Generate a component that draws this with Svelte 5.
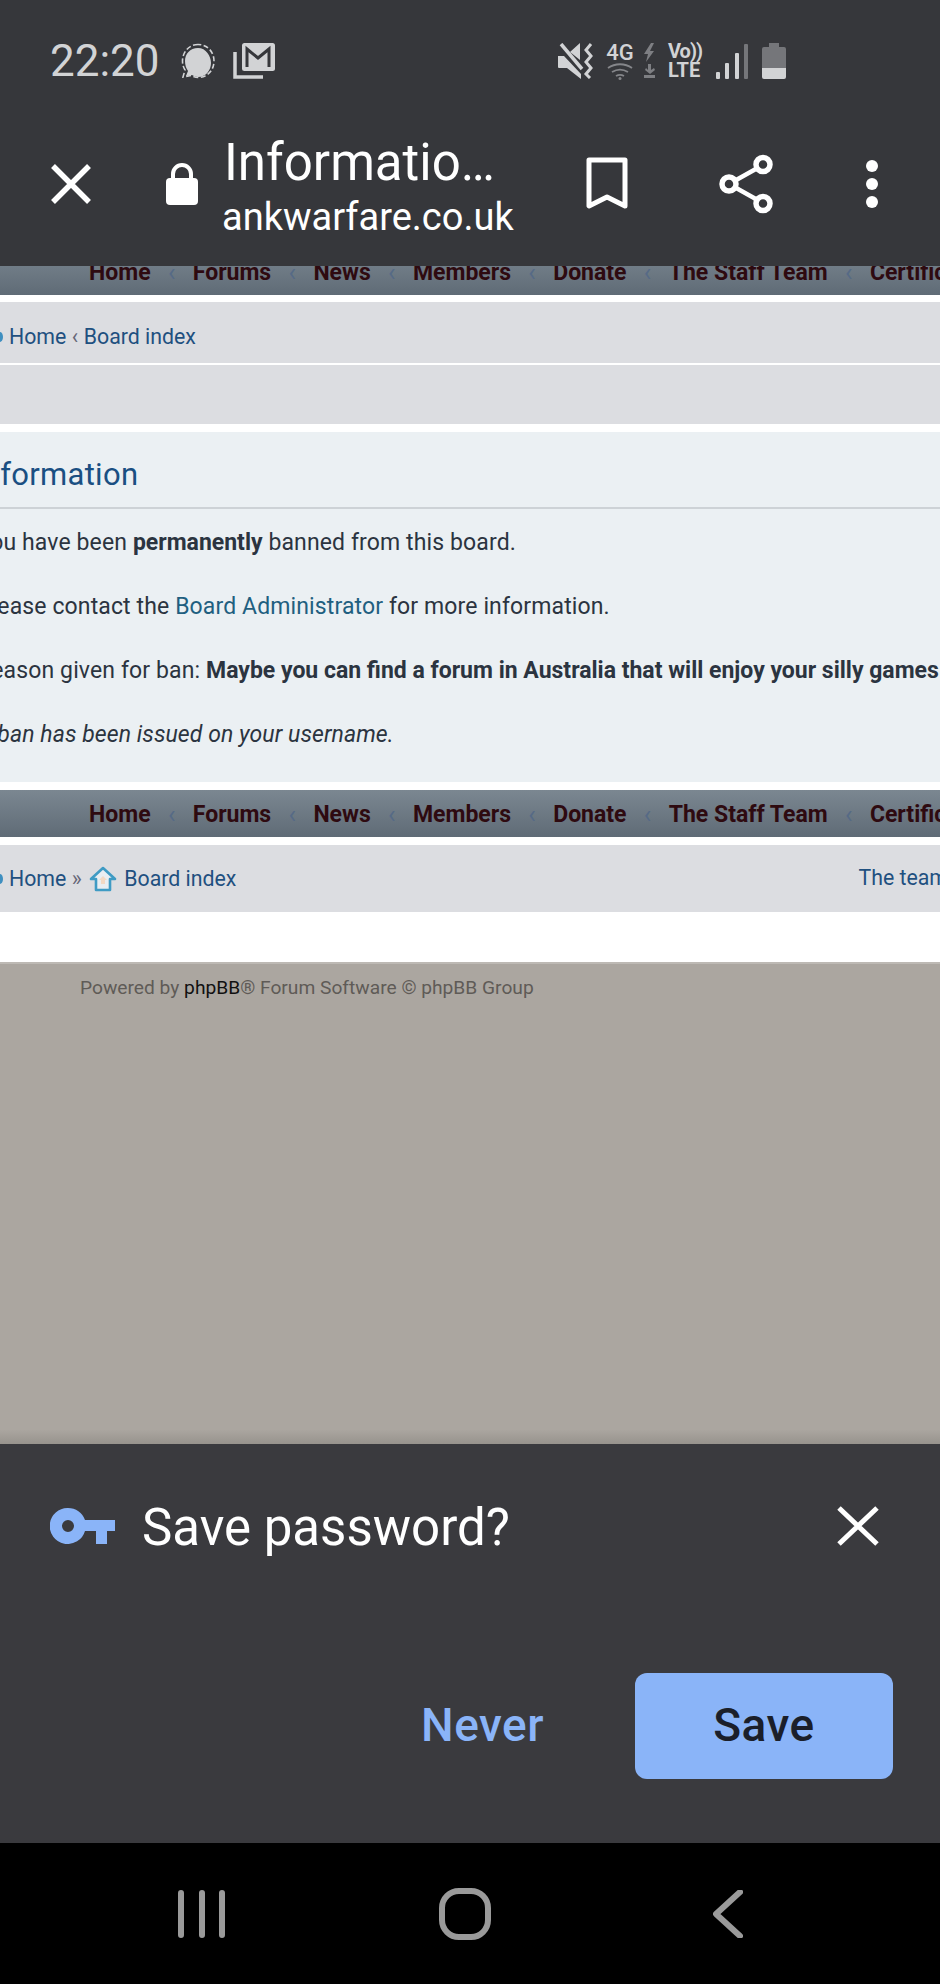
<script>
    const navItems = ["Home", "Forums", "News", "Members", "Donate", "The Staff Team", "Certification"];
</script>

{#snippet forumNav()}
    <nav class="forum-nav">
        {#each navItems as item, i}
            {#if i > 0}<span class="nav-sep">‹</span>{/if}
            <span class="nav-item">{item}</span>
        {/each}
    </nav>
{/snippet}

<div class="phone">
    <header class="top">
        <div class="status">
            <span class="time">22:20</span>
            <svg class="signal-app" width="34" height="36" viewBox="0 0 34 36">
                <path d="M17 5C9 5 4 11 4 18c0 4 1 7 3 10l-2 5 6-1c2 1 4 2 6 2 8 0 13-7 13-14S25 5 17 5z" fill="#d2d3d5" />
                <path d="M17 1.500C8 1.500 1.500 9 1.500 18c0 3.500 1 6.500 2.500 9L2 34l8-1.500c2 1 4.500 2 7 2 9 0 16-7 16-16.500S26 1.500 17 1.500z" fill="none" stroke="#d2d3d5" stroke-width="1.600" stroke-dasharray="5 2.500" />
            </svg>
            <svg class="mail" width="42" height="36" viewBox="0 0 42 36">
                <path d="M2 9v25h28" fill="none" stroke="#d2d3d5" stroke-width="3.500" />
                <rect x="9" y="0" width="33" height="28" rx="2.500" fill="#d2d3d5" />
                <path d="M14 24V6l11 9 11-9v18" fill="none" stroke="#36373b" stroke-width="3" />
            </svg>
            <div class="status-right">
                <svg class="mute" width="36" height="36" viewBox="0 0 36 36">
                    <path d="M0 13h6l17 18v5L9 25H1a1 1 0 0 1-1-1zM12 9l10-9v17z" fill="#d2d3d5" />
                    <path d="M3 1l21 25" stroke="#d2d3d5" stroke-width="3.500" />
                    <path d="M33 1l-5 6 5 6-5 6 5 6-5 6 4 4" fill="none" stroke="#d2d3d5" stroke-width="3" />
                </svg>
                <div class="net">
                    <span class="net-label">4G</span>
                    <svg width="26" height="17" viewBox="0 0 26 17">
                        <path d="M1 5c7-5 17-5 24 0M5 9c5-3 11-3 16 0M9 13c2.500-1.500 5.500-1.500 8 0" fill="none" stroke="#85868a" stroke-width="1.800" />
                        <circle cx="13" cy="15.500" r="1.500" fill="#85868a" />
                    </svg>
                </div>
                <svg class="bolt" width="13" height="36" viewBox="0 0 13 36">
                    <path d="M8 0L1 11h4l-2 8 8-11H7l4-8zM5 21h3v6l3-2 1 2-5 4-5-4 1-2 2 2zM1 32h11v3H1z" fill="#7e7f83" />
                </svg>
                <div class="volte"><span class="vo">Vo))</span><span>LTE</span></div>
                <svg class="bars" width="33" height="36" viewBox="0 0 33 36">
                    <rect x="0" y="29" width="4" height="7" rx="1" fill="#d2d3d5" />
                    <rect x="9" y="20" width="4" height="16" rx="1" fill="#d2d3d5" />
                    <rect x="19" y="10" width="4" height="26" rx="1" fill="#d2d3d5" />
                    <rect x="28" y="1" width="4" height="35" rx="1" fill="#75767a" />
                </svg>
                <svg class="battery" width="24" height="36" viewBox="0 0 24 36">
                    <path d="M7 0h10v4h5a2 2 0 0 1 2 2v19H0V6a2 2 0 0 1 2-2h5z" fill="#75767a" />
                    <path d="M0 25h24v9a2 2 0 0 1-2 2H2a2 2 0 0 1-2-2z" fill="#d2d3d5" />
                </svg>
            </div>
        </div>
        <div class="toolbar">
            <svg class="close" width="40" height="40" viewBox="0 0 40 40">
                <path d="M2 2l36 36M38 2L2 38" stroke="#fff" stroke-width="5.500" />
            </svg>
            <svg class="lock" width="32" height="42" viewBox="0 0 32 42">
                <path d="M7 17v-6a9 9 0 0 1 18 0v6" fill="none" stroke="#fff" stroke-width="4" />
                <rect x="0" y="15" width="32" height="27" rx="4" fill="#fff" />
            </svg>
            <div class="title-block">
                <div class="title">Informatio…</div>
                <div class="url">ankwarfare.co.uk</div>
            </div>
            <svg class="bookmark" width="42" height="54" viewBox="0 0 42 54">
                <path d="M3 3h36v46L21 40 3 49z" fill="none" stroke="#fff" stroke-width="5" stroke-linejoin="round" />
            </svg>
            <svg class="share" width="54" height="60" viewBox="0 0 54 60">
                <path d="M44 11L10 30l34 19" fill="none" stroke="#fff" stroke-width="4.500" />
                <circle cx="44" cy="10.500" r="7" fill="#36373b" stroke="#fff" stroke-width="5.500" />
                <circle cx="10" cy="30" r="7" fill="#36373b" stroke="#fff" stroke-width="5.500" />
                <circle cx="44" cy="49.500" r="7" fill="#36373b" stroke="#fff" stroke-width="5.500" />
            </svg>
            <svg class="dots" width="12" height="48" viewBox="0 0 12 48">
                <circle cx="6" cy="6" r="6" fill="#fff" />
                <circle cx="6" cy="24" r="6" fill="#fff" />
                <circle cx="6" cy="42" r="6" fill="#fff" />
            </svg>
        </div>
    </header>

    <main class="page">
        <div class="nav-clip">{@render forumNav()}</div>

        <div class="crumbs top-crumbs">
            <span class="crumb-dot"></span>
            <a href="#home">Home</a>
            <span class="crumb-sep">‹</span>
            <a href="#index">Board index</a>
        </div>
        <div class="empty-bar"></div>

        <section class="panel">
            <h2>Information</h2>
            <div class="panel-body">
                <p>You have been <strong>permanently</strong> banned from this board.</p>
                <p>Please contact the <a href="#admin">Board Administrator</a> for more information.</p>
                <p>Reason given for ban: <strong>Maybe you can find a forum in Australia that will enjoy your silly games</strong></p>
                <p><em>A ban has been issued on your username.</em></p>
            </div>
        </section>

        {@render forumNav()}

        <div class="crumbs bottom-crumbs">
            <span class="crumb-dot"></span>
            <a href="#home">Home</a>
            <span class="crumb-sep">»</span>
            <svg class="house" width="28" height="26" viewBox="0 0 28 26">
                <path d="M14 2L2 13h5v11h14V13h5z" fill="#e9eef2" stroke="#3f9bc4" stroke-width="2.600" stroke-linejoin="round" />
                <path d="M14 10l-4 4h2v4h4v-4h2z" fill="#f2d9c4" />
            </svg>
            <a href="#index">Board index</a>
            <a class="team" href="#team">The team</a>
        </div>
        <div class="white-gap"></div>

        <footer class="copyright">
            <span>Powered by <b>phpBB</b>® Forum Software © phpBB Group</span>
        </footer>
    </main>

    <section class="prompt">
        <div class="prompt-head">
            <svg class="key" width="65" height="36" viewBox="0 0 65 36">
                <path fill-rule="evenodd" d="M18 0a18 18 0 0 1 17 12h30v11h-8v13H46V23H35A18 18 0 1 1 18 0zm0 12a6 6 0 1 0 0 12 6 6 0 0 0 0-12z" fill="#8ab4f8" />
            </svg>
            <span class="prompt-title">Save password?</span>
            <svg class="prompt-close" width="42" height="40" viewBox="0 0 42 40">
                <path d="M2 2l38 36M40 2L2 38" stroke="#fff" stroke-width="5" />
            </svg>
        </div>
        <div class="prompt-actions">
            <span class="never">Never</span>
            <span class="save">Save</span>
        </div>
    </section>

    <div class="softkeys">
        <svg width="48" height="48" viewBox="0 0 48 48">
            <path d="M3 3v42M24 3v42M44 3v42" stroke="#9a9a9a" stroke-width="6" stroke-linecap="round" />
        </svg>
        <svg class="home-key" width="52" height="52" viewBox="0 0 52 52">
            <rect x="3" y="3" width="46" height="46" rx="17" fill="none" stroke="#9a9a9a" stroke-width="6" />
        </svg>
        <svg class="back-key" width="30" height="48" viewBox="0 0 30 48">
            <path d="M27 2L3 24l24 22" fill="none" stroke="#9a9a9a" stroke-width="6" stroke-linecap="round" stroke-linejoin="round" />
        </svg>
    </div>
</div>

<style>
    :global(body) {
        margin: 0;
        background: #000;
    }

    .phone {
        width: 940px;
        height: 1984px;
        overflow: hidden;
        display: flex;
        flex-direction: column;
        font-family: Roboto, "Liberation Sans", sans-serif;
    }

    .top {
        height: 266px;
        background: #36373b;
        flex: none;
    }

    .status {
        height: 122px;
        display: flex;
        align-items: center;
        padding-left: 50px;
        color: #d2d3d5;
    }

    .time {
        font-size: 44px;
        width: 131px;
    }

    .mail {
        margin-left: 18px;
    }

    .status-right {
        margin-left: 283px;
        display: flex;
        align-items: center;
    }

    .net {
        display: flex;
        flex-direction: column;
        align-items: center;
        width: 28px;
        margin-left: 12px;
    }

    .net-label {
        font-size: 22px;
        font-weight: 500;
        line-height: 20px;
    }

    .bolt {
        margin-left: 9px;
    }

    .volte {
        margin-left: 12px;
        width: 36px;
        display: flex;
        flex-direction: column;
        font-size: 20px;
        font-weight: 700;
        line-height: 19px;
    }

    .vo {
        letter-spacing: -1px;
    }

    .bars {
        margin-left: 12px;
    }

    .battery {
        margin-left: 13px;
    }

    .toolbar {
        height: 124px;
        display: flex;
        align-items: center;
        padding-left: 51px;
        color: #fff;
    }

    .lock {
        margin-left: 75px;
    }

    .title-block {
        margin-left: 27px;
        padding-top: 8px;
        width: 361px;
        flex: none;
    }

    .title {
        font-size: 51px;
        line-height: 58px;
        margin-left: -1px;
    }

    .url {
        font-size: 38px;
        line-height: 50px;
        margin-left: -3px;
    }

    .share {
        margin-left: 91px;
    }

    .dots {
        margin-left: 93px;
    }

    .page {
        flex: 1;
        min-height: 0;
        display: flex;
        flex-direction: column;
        background: #fff;
        overflow: hidden;
    }

    .nav-clip {
        height: 29px;
        flex: none;
        overflow: hidden;
        display: flex;
        align-items: flex-end;
    }

    .forum-nav {
        height: 47px;
        flex: none;
        width: 100%;
        box-sizing: border-box;
        padding: 1px 0 0 89px;
        display: flex;
        align-items: center;
        gap: 14.6px;
        white-space: nowrap;
        overflow: hidden;
        background: linear-gradient(#7b8791, #5f6b76);
    }

    .nav-item {
        flex: none;
        font-size: 23px;
        font-weight: 700;
        color: #2e0a10;
    }

    .nav-sep {
        flex: none;
        font-size: 25px;
        color: #566a86;
        width: 13px;
        text-align: center;
    }

    .crumbs {
        flex: none;
        display: flex;
        align-items: center;
        background: #dcdde1;
        font-size: 21.3px;
        white-space: nowrap;
    }

    .crumbs a {
        color: #1f5080;
        text-decoration: none;
    }

    .crumb-dot {
        width: 6px;
        height: 10px;
        margin-right: 6px;
        margin-left: -3px;
        border-radius: 50%;
        background: #3f8fc0;
    }

    .crumb-sep {
        color: #667;
        margin: 0 5.5px;
    }

    .top-crumbs {
        margin-top: 7px;
        height: 61px;
        border-bottom: 2px solid #fff;
    }

    .top-crumbs > * {
        position: relative;
        top: 4px;
    }

    .empty-bar {
        height: 59px;
        flex: none;
        background: #dcdde1;
    }

    .panel {
        margin-top: 8px;
        height: 350px;
        flex: none;
        background: #ebf0f3;
        margin-left: -23px;
    }

    h2 {
        margin: 0 0 0 3px;
        height: 77px;
        box-sizing: border-box;
        padding-top: 9px;
        display: flex;
        align-items: center;
        font-size: 31px;
        font-weight: 400;
        letter-spacing: 0.3px;
        text-indent: -6px;
        color: #1a4f82;
        border-bottom: 2px solid #cdd2d6;
    }

    .panel-body {
        white-space: nowrap;
        padding-top: 2px;
    }

    p {
        margin: 0;
        height: 64px;
        line-height: 64px;
        font-size: 23px;
        letter-spacing: 0.12px;
        color: #2b3440;
    }

    p strong {
        letter-spacing: 0;
    }

    p em {
        letter-spacing: 0.08px;
    }

    p a {
        color: #1f5f80;
        text-decoration: none;
    }

    .page > :global(.forum-nav) {
        margin-top: 8px;
    }

    .bottom-crumbs {
        margin-top: 8px;
        height: 67px;
    }

    .house {
        margin: 0 7px 0 2px;
    }

    .team {
        margin-left: auto;
        margin-right: -8px;
        transform: translateY(-1px);
    }

    .white-gap {
        height: 50px;
        flex: none;
    }

    .copyright {
        flex: 1;
        background: linear-gradient(#aba6a0 0, #aba6a0 97%, #97938d 100%);
        border-top: 2px solid #bdb9b4;
        padding: 12px 0 0 80px;
        font-size: 19.2px;
        color: #5f5b57;
    }

    .copyright b {
        font-weight: 400;
        color: #111;
    }

    .prompt {
        height: 399px;
        flex: none;
        background: #3a3a3e;
    }

    .prompt-head {
        padding: 62px 0 0 50px;
        display: flex;
        align-items: center;
        height: 40px;
    }

    .prompt-title {
        margin-left: 27px;
        padding-top: 2px;
        font-size: 51px;
        color: #fff;
    }

    .prompt-close {
        margin-left: auto;
        margin-right: 61px;
    }

    .prompt-actions {
        margin-top: 127px;
        padding-right: 47px;
        display: flex;
        justify-content: flex-end;
        align-items: center;
        font-size: 46px;
        font-weight: 500;
        letter-spacing: 0.5px;
    }

    .never {
        color: #8ab4f8;
        margin-right: 91px;
        padding-bottom: 2px;
    }

    .save {
        box-sizing: border-box;
        width: 258px;
        height: 106px;
        padding-bottom: 2px;
        border-radius: 12px;
        background: #8ab4f8;
        color: #1b1f2a;
        display: flex;
        align-items: center;
        justify-content: center;
    }

    .softkeys {
        height: 141px;
        flex: none;
        background: #000;
        display: flex;
        align-items: center;
        padding-left: 178px;
    }

    .home-key {
        margin-left: 213px;
    }

    .back-key {
        margin-left: 222px;
    }
</style>
